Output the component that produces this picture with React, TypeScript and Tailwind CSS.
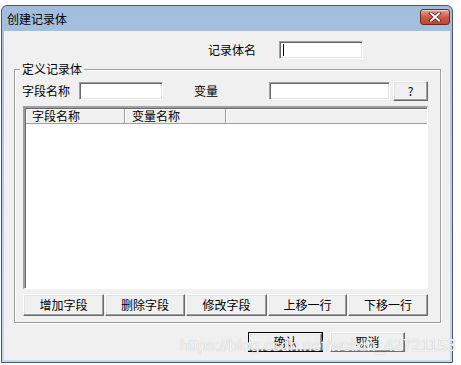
import React from "react";

const font = { fontFamily: '"Noto Sans CJK SC", "Liberation Sans", sans-serif' };

function Input({ w, caret }: { w: string; caret?: boolean }) {
  return (
    <div
      className={`${w} h-[18px] bg-white border-t border-l border-[#a0a0a0] border-b border-r border-b-white border-r-white shadow-[inset_1px_1px_0_#696969,inset_-1px_-1px_0_#e3e3e3] flex items-center pl-[3px]`}
    >
      {caret ? <div className="w-[1px] h-[12px] bg-black" /> : null}
    </div>
  );
}

function Btn({ w, h, children, def }: { w: string; h: string; children: React.ReactNode; def?: boolean }) {
  return (
    <div className={`${w} ${h} ${def ? "border border-black" : ""} flex`}>
      <div className="flex-1 bg-[#f0f0f0] border-t border-l border-white border-b border-r border-b-[#696969] border-r-[#696969] shadow-[inset_-1px_-1px_0_#a0a0a0,inset_1px_1px_0_#e3e3e3] flex items-center justify-center text-[12px] leading-none text-black">
        {children}
      </div>
    </div>
  );
}

export default function App() {
  return (
    <div className="w-[461px] h-[365px] bg-white overflow-hidden relative" style={font}>
      <div className="ml-[1px] mt-[5px] w-[452px] h-[358px] border border-[#4d5866] rounded-t-[6px] bg-gradient-to-b from-[#a2bcdd] via-[#b8cfea] to-[#c4d8ef] flex flex-col">
        {/* title bar */}
        <div className="h-[25px] flex items-center pl-[5px] pr-[2px] shrink-0">
          <span className="text-[12px] text-black leading-none">创建记录体</span>
          <div className="flex-1" />
          <div className="w-[30px] h-[16px] mt-[-4px] rounded-[3px] border border-[#6e2a22] bg-gradient-to-b from-[#e7a08f] via-[#cf5b45] to-[#c0442e] flex items-center justify-center shadow-[inset_0_1px_0_rgba(255,255,255,0.5)]">
            <svg width="14" height="10" viewBox="0 0 14 10">
              <path d="M3 1.5 L11 8.5 M11 1.5 L3 8.5" stroke="#5a1f18" strokeWidth="3.6" strokeLinecap="square" />
              <path d="M3 1.5 L11 8.5 M11 1.5 L3 8.5" stroke="#ffffff" strokeWidth="2" strokeLinecap="square" />
            </svg>
          </div>
        </div>
        {/* client area */}
        <div className="flex-1 mx-[2px] mb-[2px] bg-[#f0f0f0] flex flex-col text-black text-[12px] leading-none">
          <div className="flex items-center mt-[10px] h-[18px]">
            <span className="ml-[204px] w-[71px]">记录体名</span>
            <Input w="w-[84px]" caret />
          </div>
          <fieldset className="ml-[10px] mt-[3px] w-[427px] h-[261px] border border-[#a0a0a0] shadow-[inset_1px_1px_0_#fff,1px_1px_0_#fff] flex flex-col">
            <legend className="ml-[5px] px-[2px] h-[14px] leading-[14px] text-[12px]">定义记录体</legend>
            <div className="flex items-center pt-[5px] pl-[7px] h-[25px]">
              <span className="w-[57px]">字段名称</span>
              <Input w="w-[84px]" />
              <span className="ml-[31px] w-[75px]">变量</span>
              <Input w="w-[121px]" />
              <div className="ml-[3px]">
                <Btn w="w-[35px]" h="h-[20px]">?</Btn>
              </div>
            </div>
            <div className="ml-[8px] mt-[5px] w-[405px] h-[183px] bg-white border-t-2 border-l-2 border-t-[#a0a0a0] border-l-[#a0a0a0] border-b border-r border-b-white border-r-white shadow-[inset_1px_1px_0_#696969] flex flex-col">
              <div className="h-[15px] flex ml-[1px] mt-[1px] bg-[#f0f0f0]">
                <div className="w-[99px] border-r border-b border-r-[#a0a0a0] border-b-[#a0a0a0] shadow-[inset_1px_1px_0_#fff] pl-[6px] flex items-center">字段名称</div>
                <div className="w-[101px] border-r border-b border-r-[#a0a0a0] border-b-[#a0a0a0] shadow-[inset_1px_1px_0_#fff] pl-[7px] flex items-center">变量名称</div>
                <div className="flex-1 border-b border-b-[#a0a0a0] shadow-[inset_1px_1px_0_#fff]" />
              </div>
            </div>
            <div className="flex gap-[1px] ml-[8px] mt-[5px]">
              <Btn w="w-[81px]" h="h-[22px]">增加字段</Btn>
              <Btn w="w-[80px]" h="h-[22px]">删除字段</Btn>
              <Btn w="w-[81px]" h="h-[22px]">修改字段</Btn>
              <Btn w="w-[79px]" h="h-[22px]">上移一行</Btn>
              <Btn w="w-[80px]" h="h-[22px]">下移一行</Btn>
            </div>
          </fieldset>
          <div className="flex mt-[9px] ml-[244px] gap-[7px]">
            <Btn w="w-[75px]" h="h-[20px]" def>确认</Btn>
            <Btn w="w-[75px]" h="h-[20px]">取消</Btn>
          </div>
        </div>
      </div>
      <div
        className="absolute left-[180px] top-[337px] text-[16.3px] leading-[16px] text-[#f4f4f4] whitespace-nowrap"
        style={{ fontFamily: '"Liberation Sans", Arial, sans-serif', textShadow: "0 0 1px #b0b0b0" }}
      >
        https://blog.csdn.net/weixin_42721153
      </div>
    </div>
  );
}
